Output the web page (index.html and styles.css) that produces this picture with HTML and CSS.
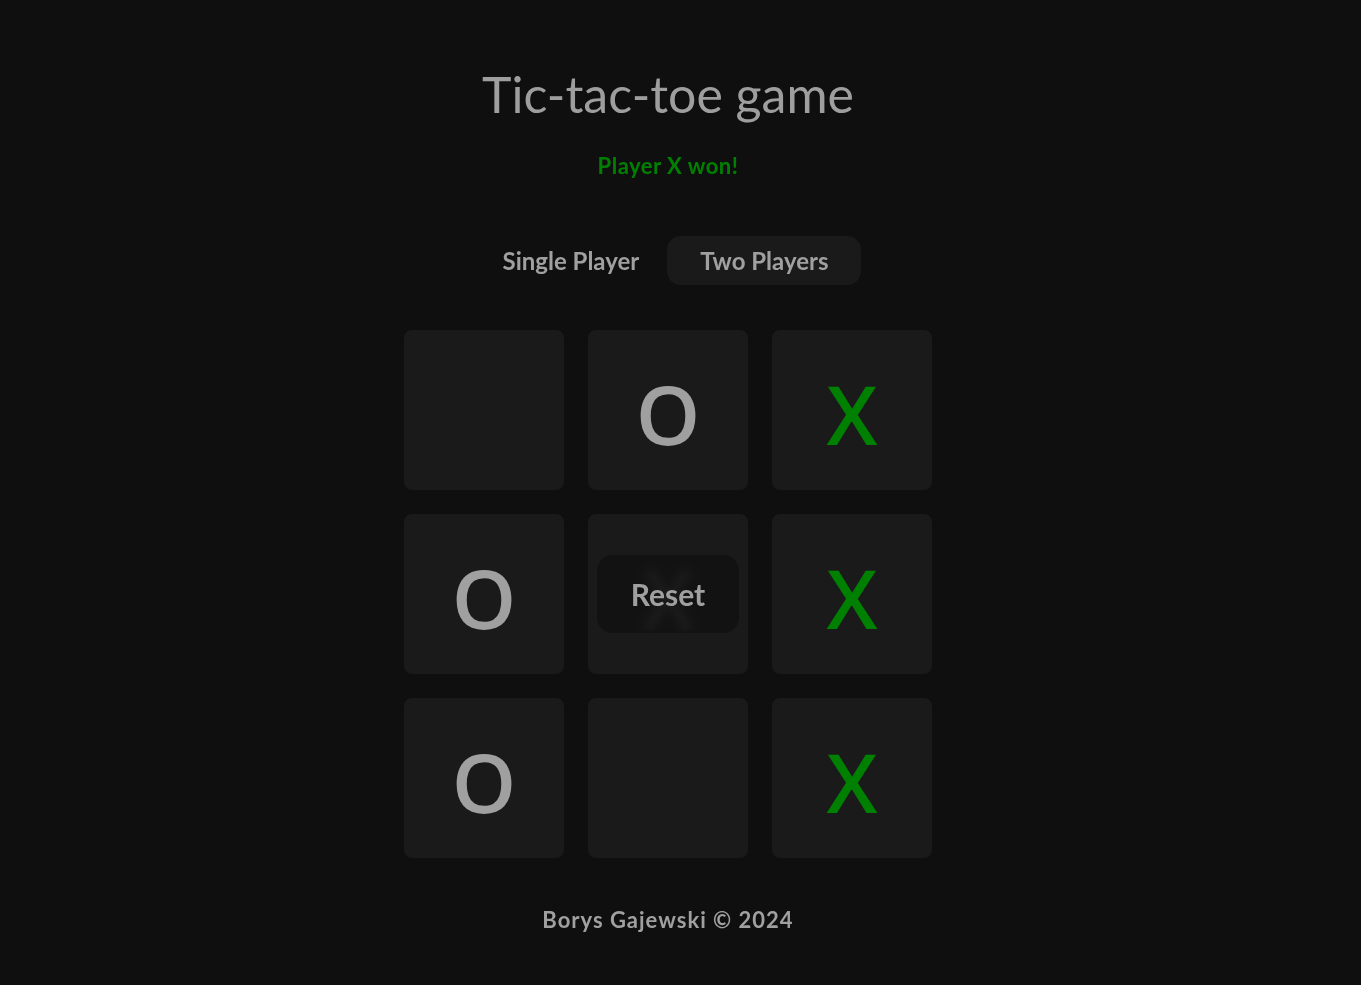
FILE: index.html
```html
<!DOCTYPE html>
<html lang="en">
<head>
<meta charset="utf-8">
<title>Tic-tac-toe game</title>
<link rel="stylesheet" href="styles.css">
</head>
<body>
<main class="app">
  <h1 class="title">Tic-tac-toe game</h1>
  <p class="status">Player X won!</p>
  <div class="modes">
    <button class="mode">Single Player</button>
    <button class="mode active">Two Players</button>
  </div>
  <div class="board-wrap">
    <div class="board">
      <div class="cell"></div>
      <div class="cell o">O</div>
      <div class="cell x">X</div>
      <div class="cell o">O</div>
      <div class="cell x">X</div>
      <div class="cell x">X</div>
      <div class="cell o">O</div>
      <div class="cell"></div>
      <div class="cell x">X</div>
    </div>
    <button class="reset">Reset</button>
  </div>
  <footer class="footer">Borys Gajewski © 2024</footer>
</main>
</body>
</html>
```
FILE: styles.css
```css
html, body {
  margin: 0;
  padding: 0;
  background: #0f0f0f;
  min-height: 100%;
}
body {
  font-family: "Lato", "Open Sans", sans-serif;
  color: #a0a0a0;
}
.app {
  box-sizing: border-box;
  width: 1336px;
  display: flex;
  flex-direction: column;
  align-items: center;
  padding-top: 62px;
}
.title {
  margin: 0;
  font-size: 50px;
  font-weight: 400;
  line-height: 64px;
  color: #9e9e9e;
}
.status {
  margin: 25px 0 0;
  font-size: 22px;
  line-height: 30px;
  font-weight: 700;
  letter-spacing: 0.5px;
  color: #008000;
}
.modes {
  margin-top: 55px;
  margin-right: 4px;
  display: flex;
  gap: 0;
}
.mode {
  font-family: inherit;
  font-size: 24px;
  font-weight: 700;
  color: #a0a0a0;
  background: transparent;
  border: none;
  border-radius: 14px;
  height: 49px;
  padding: 0 28px 0 32px;
  cursor: pointer;
}
.mode.active {
  background: #1a1a1a;
  padding: 0 33px;
}
.board-wrap {
  position: relative;
  margin-top: 45px;
}
.board {
  display: grid;
  grid-template-columns: repeat(3, 160px);
  grid-template-rows: repeat(3, 160px);
  gap: 24px;
}
.cell {
  background: #1a1a1a;
  border-radius: 8px;
  display: flex;
  align-items: center;
  justify-content: center;
  font-family: "Open Sans", "Liberation Sans", sans-serif;
  font-size: 82px;
  font-weight: 600;
  line-height: 1;
  padding-top: 6px;
  box-sizing: border-box;
}
.cell.x { color: #008000; }
.cell.o { color: #a0a0a0; }
.reset {
  position: absolute;
  left: 50%;
  top: 50%;
  transform: translate(-50%, -50%);
  width: 142px;
  height: 78px;
  border: none;
  border-radius: 16px;
  background: rgba(18, 18, 18, 0.85);
  backdrop-filter: blur(5px) grayscale(1);
  font-family: inherit;
  font-size: 30px;
  font-weight: 700;
  color: #a0a0a0;
  cursor: pointer;
}
.footer {
  margin-top: 47px;
  font-size: 22px;
  font-weight: 700;
  letter-spacing: 1px;
  line-height: 30px;
}
```
